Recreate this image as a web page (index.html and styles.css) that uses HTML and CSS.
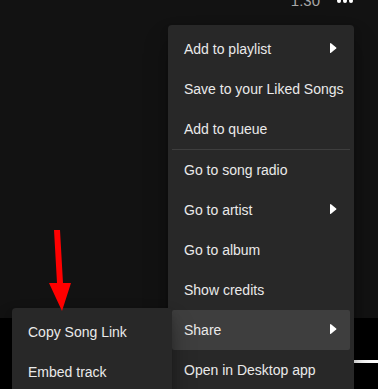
FILE: index.html
```html
<!DOCTYPE html>
<html lang="en">
<head>
    <meta charset="UTF-8">
    <meta name="viewport" content="width=device-width, initial-scale=1.0">
    <title>Track menu</title>
    <link rel="stylesheet" href="styles.css">
</head>
<body>
    <div class="page">
        <!-- dòng bài hát phía trên (bị cắt) -->
        <div class="track-row">
            <span class="track-duration">1:30</span>
            <span class="track-more">
                <span class="dot"></span>
                <span class="dot"></span>
                <span class="dot"></span>
            </span>
        </div>
        <div class="tracklist"></div>

        <!-- thanh phát nhạc phía dưới -->
        <div class="now-playing">
            <div class="progress"></div>
        </div>
    </div>

    <!-- menu ngữ cảnh -->
    <ul class="context-menu">
        <li class="menu-item">Add to playlist
            <svg class="submenu-arrow" width="7" height="12" viewBox="0 0 7 12"><path d="M1 1.2 L6.2 5.4 Q6.8 6 6.2 6.6 L1 10.8 Q0 11.5 0 10.2 L0 1.8 Q0 0.5 1 1.2 Z" fill="#fff"/></svg>
        </li>
        <li class="menu-item">Save to your Liked Songs</li>
        <li class="menu-item">Add to queue</li>
        <li class="menu-divider"></li>
        <li class="menu-item">Go to song radio</li>
        <li class="menu-item">Go to artist
            <svg class="submenu-arrow" width="7" height="12" viewBox="0 0 7 12"><path d="M1 1.2 L6.2 5.4 Q6.8 6 6.2 6.6 L1 10.8 Q0 11.5 0 10.2 L0 1.8 Q0 0.5 1 1.2 Z" fill="#fff"/></svg>
        </li>
        <li class="menu-item">Go to album</li>
        <li class="menu-item">Show credits</li>
        <li class="menu-item active">Share
            <svg class="submenu-arrow" width="7" height="12" viewBox="0 0 7 12"><path d="M1 1.2 L6.2 5.4 Q6.8 6 6.2 6.6 L1 10.8 Q0 11.5 0 10.2 L0 1.8 Q0 0.5 1 1.2 Z" fill="#fff"/></svg>
        </li>
        <li class="menu-item">Open in Desktop app</li>
    </ul>

    <!-- menu con của Share -->
    <ul class="share-menu">
        <li class="menu-item">Copy Song Link</li>
        <li class="menu-item">Embed track</li>
    </ul>

    <!-- mũi tên đỏ chú thích -->
    <svg class="annotation-arrow" width="30" height="86" viewBox="45 228 30 86">
        <polygon points="54,230 60,230 63,283 71,283 62,311 49,283 57,283" fill="#ff0000"/>
    </svg>
</body>
</html>
```

FILE: styles.css
```css
* {
    box-sizing: border-box;
}

body {
    margin: 0;
    width: 378px;
    height: 389px;
    overflow: hidden;
    background-color: #121212;
    font-family: "Liberation Sans", Arial, sans-serif;
    font-size: 14px;
    color: #eaeaea;
    position: relative;
}

.page {
    display: flex;
    flex-direction: column;
    height: 389px;
}

.track-row {
    display: flex;
    justify-content: flex-end;
    align-items: flex-start;
    height: 14px;
    margin-top: -6px;
    padding-right: 25px;
}

.track-duration {
    color: #a7a7a7;
    font-size: 15px;
    line-height: 14px;
    margin-right: 17px;
}

.track-more {
    display: flex;
    gap: 2px;
    margin-top: 5px;
}

.dot {
    width: 4px;
    height: 4px;
    border-radius: 50%;
    background-color: #fff;
}

.tracklist {
    flex-grow: 1;
}

/* thanh phát nhạc */
.now-playing {
    height: 71px;
    background-color: #000;
    display: flex;
    flex-direction: column;
    padding-top: 42px;
}

.progress {
    align-self: flex-end;
    width: 60px;
    height: 3px;
    background: linear-gradient(to right, #b3b3b3, #ffffff 40%, #ffffff);
}

/* menu ngữ cảnh */
.context-menu,
.share-menu {
    list-style: none;
    margin: 0;
    padding: 4px;
    position: absolute;
    background-color: #282828;
    border-radius: 4px;
    box-shadow: 0 16px 24px rgba(0, 0, 0, 0.3), 0 6px 8px rgba(0, 0, 0, 0.2);
}

.context-menu {
    left: 168px;
    top: 25px;
    width: 186px;
}

.share-menu {
    left: 12px;
    top: 308px;
    width: 160px;
    z-index: 2;
}

.menu-item {
    height: 40px;
    display: flex;
    align-items: center;
    justify-content: space-between;
    padding: 0 13px 0 12px;
    border-radius: 2px;
    white-space: nowrap;
}

.menu-item.active {
    background-color: #3e3e3e;
}

.submenu-arrow {
    margin-top: -3px;
}

.menu-divider {
    height: 1px;
    background-color: #3e3e3e;
}

.annotation-arrow {
    position: absolute;
    left: 45px;
    top: 228px;
    z-index: 3;
}
```
